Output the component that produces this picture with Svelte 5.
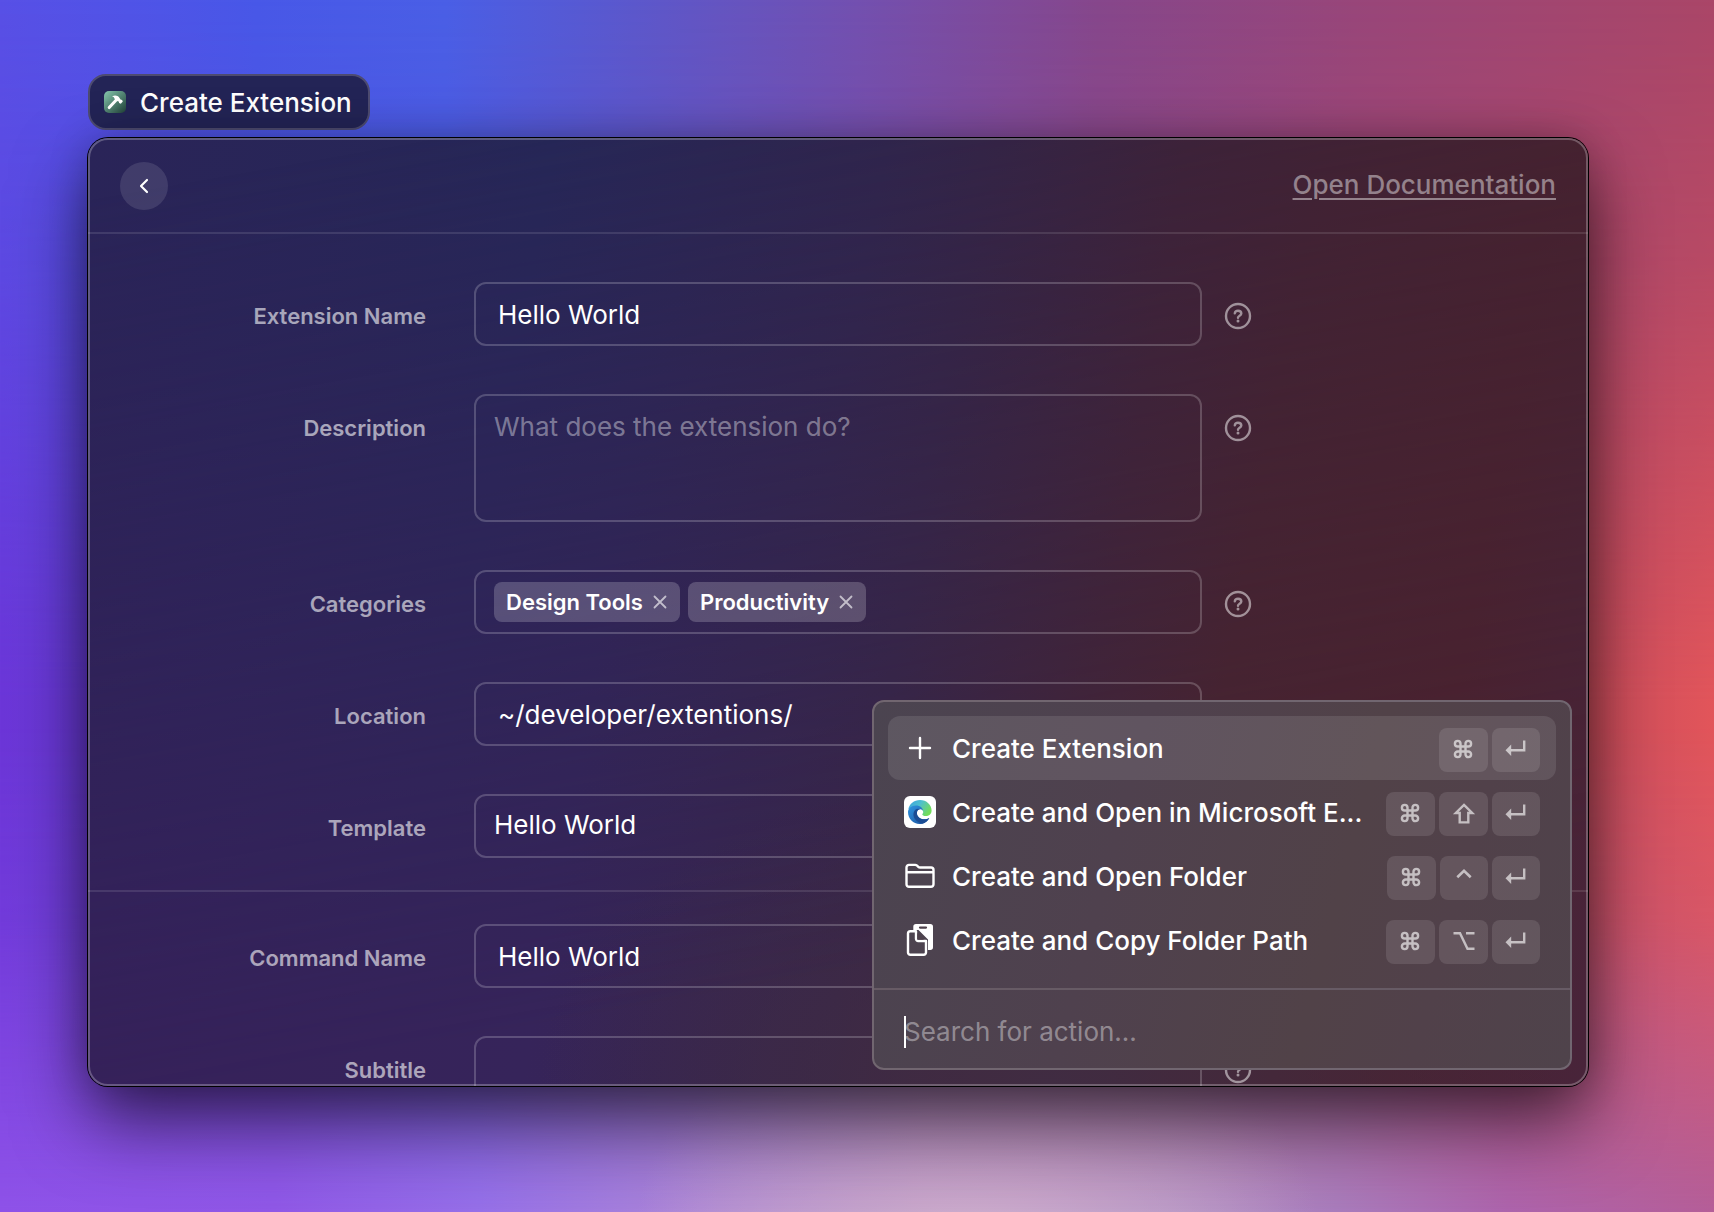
<script>
  let name = $state('Hello World');
  let description = $state('');
  let categories = $state(['Design Tools', 'Productivity']);
  let location = $state('~/developer/extentions/');
  let template = $state('Hello World');
  let command = $state('Hello World');
  let subtitle = $state('');
  let query = $state('');

  const actions = [
    { icon: 'plus', label: 'Create Extension', keys: ['command', 'return'], active: true },
    { icon: 'edge', label: 'Create and Open in Microsoft E...', keys: ['command', 'shift', 'return'] },
    { icon: 'folder', label: 'Create and Open Folder', keys: ['command', 'control', 'return'] },
    { icon: 'copy', label: 'Create and Copy Folder Path', keys: ['command', 'option', 'return'] }
  ];

  function removeCategory(category) {
    categories = categories.filter((c) => c !== category);
  }
</script>

{#snippet help(topic)}
  <button class="help" type="button" aria-label={`Help: ${topic}`}>
    <svg viewBox="0 0 28 28" fill="none" stroke="currentColor" stroke-width="2.400" stroke-linecap="round" stroke-linejoin="round">
      <circle cx="14" cy="14" r="12" />
      <path d="M10.800 11.300c.2-1.600 1.500-2.500 3.200-2.500 1.900 0 3.300 1 3.300 2.700 0 2.300-3.300 2.200-3.300 4.300" />
      <circle cx="14" cy="19" r="1.500" fill="currentColor" stroke="none" />
    </svg>
  </button>
{/snippet}

{#snippet keycap(key)}
  <kbd class={key} aria-label={key}>
    <svg viewBox="0 0 24 24" fill="none" stroke="currentColor" stroke-width="2.400">
      {#if key === 'command'}
        <path d="M8.500 8.500H5.700A2.800 2.800 0 1 1 8.500 5.700v10.600A2.800 2.800 0 1 1 5.700 13.500h10.600A2.800 2.800 0 1 1 13.500 16.300V5.700A2.800 2.800 0 1 1 16.300 8.500z" />
      {:else if key === 'return'}
        <path d="M20.200 2.500v9.800H7" />
        <path d="M1.500 12.300 7.200 6.600v11.400z" fill="currentColor" stroke="none" />
      {:else if key === 'shift'}
        <path d="M12 2.900 20.200 11H16.300v9.400H7.700V11H3.800z" />
      {:else if key === 'control'}
        <path d="M5.300 11.200 12 4.700l6.700 6.500" stroke-width="2.600" />
      {:else}
        <path d="M1.500 3.200H8l7.500 15.600h7M14 3.200h8.500" />
      {/if}
    </svg>
  </kbd>
{/snippet}

<main>
  <div class="badge">
    <svg viewBox="0 0 22 22">
      <defs>
        <linearGradient id="tile" x1="0" y1="0" x2="1" y2="1">
          <stop offset="0" stop-color="#86c8ae" />
          <stop offset="1" stop-color="#1f4038" />
        </linearGradient>
      </defs>
      <rect width="22" height="22" rx="5" fill="url(#tile)" />
      <path d="M5.200 16.600 12 9.200" stroke="#fff" stroke-width="3" stroke-linecap="round" />
      <path d="M8 5.600c2.600-1.800 5.400-1.300 7.200.8l1.300 2.200 1.600.3.700 1.700-2 2.100-1.700-.6-.3-1.500-1.800-.6-2.600-2.400c-.2-1.300-1-1.800-2.400-2z" fill="#fff" />
    </svg>
    <span class="text">Create Extension</span>
  </div>

  <section class="window" aria-label="Create Extension">
    <header>
      <button class="back" type="button" aria-label="Back">
        <svg viewBox="0 0 16 16" fill="none" stroke="currentColor" stroke-width="2.200" stroke-linecap="round" stroke-linejoin="round">
          <path d="M11 2 5 8l6 6" />
        </svg>
      </button>
      <a href="#documentation">Open Documentation</a>
    </header>

    <form onsubmit={(e) => e.preventDefault()}>
      <div class="group">
        <div class="row">
          <label for="name">Extension Name</label>
          <input id="name" class="field" bind:value={name} />
          {@render help('Extension Name')}
        </div>
        <div class="row">
          <label for="description">Description</label>
          <textarea id="description" class="field" placeholder="What does the extension do?" bind:value={description}></textarea>
          {@render help('Description')}
        </div>
        <div class="row">
          <span class="label" id="categories">Categories</span>
          <div class="field chips" role="group" aria-labelledby="categories">
            {#each categories as category (category)}
              <span class="chip">
                {category}
                <button type="button" aria-label={`Remove ${category}`} onclick={() => removeCategory(category)}>
                  <svg viewBox="0 0 14 14" fill="none" stroke="currentColor" stroke-width="1.800" stroke-linecap="round">
                    <path d="m1.500 1.500 11 11M12.500 1.500l-11 11" />
                  </svg>
                </button>
              </span>
            {/each}
          </div>
          {@render help('Categories')}
        </div>
        <div class="row">
          <label for="location">Location</label>
          <input id="location" class="field" bind:value={location} />
        </div>
        <div class="row">
          <label for="template">Template</label>
          <select id="template" class="field" bind:value={template}>
            <option>Hello World</option>
          </select>
        </div>
      </div>
      <div class="group divided">
        <div class="row">
          <label for="command">Command Name</label>
          <input id="command" class="field" bind:value={command} />
        </div>
        <div class="row">
          <label for="subtitle">Subtitle</label>
          <input id="subtitle" class="field" bind:value={subtitle} />
          {@render help('Subtitle')}
        </div>
      </div>
    </form>

    <div class="panel">
      <ul>
        {#each actions as action}
          <li>
            <button type="button" class="action" class:active={action.active}>
              <svg class="icon" viewBox="0 0 32 32" fill="none" stroke="currentColor" stroke-width="2.400" stroke-linecap="round" stroke-linejoin="round">
                {#if action.icon === 'plus'}
                  <path d="M16 6v20M6 16h20" />
                {:else if action.icon === 'edge'}
                  <defs>
                    <linearGradient id="sky" x1="0" y1="0" x2="1" y2=".5">
                      <stop offset="0" stop-color="#3aa0e0" />
                      <stop offset=".5" stop-color="#4dbfce" />
                      <stop offset="1" stop-color="#72dc5c" />
                    </linearGradient>
                    <linearGradient id="sea" x1="0" y1="0" x2="1" y2="1">
                      <stop offset="0" stop-color="#2f94e0" />
                      <stop offset="1" stop-color="#1a4f9c" />
                    </linearGradient>
                  </defs>
                  <g stroke="none">
                    <rect width="32" height="32" rx="6" fill="#fff" />
                    <path d="M4.300 13.500C5.200 8 10 4 16 4c6.600 0 11.600 5 11.600 10.400 0 3.600-2.800 5.600-5.800 5.600-2.200 0-3.500-.7-3.500-1.500 0-.6.900-1 .9-2.400 0-2.600-2.800-4.900-6.700-4.900-3.400 0-6.400 1.200-8.200 2.300z" fill="url(#sky)" />
                    <path d="M4 16c0-3.400 3.300-6.600 8-6.600 4.300 0 7.200 2.600 7.200 6.200 0-1.400-1.400-2.400-3-2.400-2 0-3.300 1.600-3.300 3.700 0 4 3.900 6.400 7.700 6.400 1.800 0 3.300-.5 4.700-1.300-1.900 3.600-5.400 6-9.600 6C9.200 28 4 22.600 4 16z" fill="url(#sea)" />
                    <path d="M11.300 13.800c-2.300 2.300-2.500 6.200-.4 9.200 1.800 2.600 4.600 4 7.400 4.700 3-.7 5.500-2.800 7-5.700-1.400.8-2.900 1.300-4.700 1.300-3.800 0-7.700-2.400-7.700-6.400 0-2.100 1.300-3.700 3.300-3.700-1.700-.9-3.600-.7-4.900.6z" fill="#1b4c94" />
                  </g>
                {:else if action.icon === 'folder'}
                  <path d="M2.500 12.300h27M5 4.900h6.200c.8 0 1.300.3 1.900.8l1.200 1.100c.5.500 1 .7 1.800.7H27a2.500 2.500 0 0 1 2.500 2.500v14.300a2.500 2.500 0 0 1-2.500 2.500H5a2.500 2.500 0 0 1-2.500-2.500V7.400A2.500 2.500 0 0 1 5 4.900z" />
                {:else}
                  <path d="M12 0h14.300A2.700 2.700 0 0 1 29 2.700V23.300a2.700 2.700 0 0 1-2.700 2.700H24V15.500L14.500 6H9.300V2.700A2.700 2.700 0 0 1 12 0z" fill="currentColor" stroke="none" />
                  <path d="M16 3.600h6" stroke="#4f414c" stroke-width="2.200" />
                  <path d="M12 7.300H6.300A2.300 2.300 0 0 0 4 9.600v18.900a2.300 2.300 0 0 0 2.300 2.300h13.400a2.300 2.300 0 0 0 2.300-2.300V17M12 7.300v7.500a2.200 2.200 0 0 0 2.200 2.200H22" />
                  <path d="M13.300 9v6.700H20z" fill="#4f414c" stroke="none" />
                {/if}
              </svg>
              <span class="text">{action.label}</span>
              <span class="keys">
                {#each action.keys as key}{@render keycap(key)}{/each}
              </span>
            </button>
          </li>
        {/each}
      </ul>
      <div class="search">
        <input type="text" aria-label="Search for action" placeholder="Search for action..." bind:value={query} />
        <span class="caret"></span>
      </div>
    </div>
  </section>
</main>

<style>
  :global(body) {
    margin: 0;
  }

  main,
  main * {
    box-sizing: border-box;
  }

  main {
    position: relative;
    isolation: isolate;
    display: flex;
    flex-direction: column;
    align-items: flex-start;
    gap: 8px;
    height: 100vh;
    min-height: 800px;
    padding: 74px 126px 126px 88px;
    overflow: hidden;
    color: #fff;
    font-family: Inter, 'Liberation Sans', sans-serif;
    font-size: 26px;
    line-height: 32px;
    background: linear-gradient(90deg, #5850e6, #4858e8 15%, #4a5fe6 26%, #5c58cc 37%, #7350b0 50%, #86478c 64%, #98467a 79%, #aa4668);
  }

  main::before,
  main::after {
    content: '';
    position: absolute;
    inset: 0;
    z-index: -1;
  }

  main::before {
    background: linear-gradient(90deg, #6c36d8, #5a46d0 25%, #7a4898 50%, #a84668 75%, #c84c5c 92%, #e2555a);
    mask-image: linear-gradient(#0000, #0004 22%, #000 58%);
  }

  main::after {
    background:
      radial-gradient(ellipse 20% 20% at 57% 102%, #ccaccc, #ccaccc00),
      linear-gradient(90deg, #8e52e8, #9058e6 16%, #9670e8 28%, #ae88d4 42%, #bc96c8 54%, #b090c4 68%, #a87cbc 78%, #ac64ac 88%, #b45e98);
    mask-image: linear-gradient(#0000 60%, #0003 76%, #000);
  }

  button,
  input,
  textarea,
  select {
    margin: 0;
    padding: 0;
    border: 0;
    outline: 0;
    background: none;
    color: inherit;
    font: inherit;
    appearance: none;
  }

  svg {
    display: block;
    flex: none;
  }

  .badge {
    display: flex;
    align-items: center;
    gap: 14px;
    height: 56px;
    flex: none;
    padding: 0 16px 0 14px;
    border: 2px solid #4d4b70;
    border-radius: 18px;
    background: #232456;
    font-weight: 500;
  }

  .badge svg {
    width: 22px;
    height: 22px;
  }

  .window {
    position: relative;
    align-self: stretch;
    flex: 1;
    min-height: 0;
    overflow: hidden;
    border-radius: 20px;
    isolation: isolate;
    background: linear-gradient(100deg, #2a2458, #262757 28%, #2f254c 48%, #3c2239 66%, #442230 90%);
    box-shadow:
      0 0 0 1px #000,
      0 36px 72px #0009,
      0 0 40px #0003;
  }

  .window::before {
    content: '';
    position: absolute;
    inset: 0;
    z-index: -1;
    background:
      radial-gradient(ellipse 34% 34% at 64% 100%, #402c42, #402c4200),
      linear-gradient(100deg, #36205a, #36245a 36%, #38264a 54%, #482430 74%, #4a2230 88%, #48243a);
    mask-image: linear-gradient(170deg, #0000 5%, #000 80%);
  }

  .window::after {
    content: '';
    position: absolute;
    inset: 0;
    border: 2px solid #ffffff40;
    border-radius: inherit;
    pointer-events: none;
  }

  header {
    display: flex;
    align-items: center;
    justify-content: space-between;
    height: 96px;
    padding: 2px 32px 0;
    border-bottom: 2px solid #ffffff1c;
  }

  .back {
    display: grid;
    place-items: center;
    width: 48px;
    height: 48px;
    border-radius: 50%;
    background: #ffffff1c;
  }

  .back svg {
    width: 16px;
    height: 16px;
  }

  header a {
    padding-bottom: 2px;
    color: #ffffff70;
    font-weight: 500;
    text-decoration-thickness: 2px;
    text-underline-offset: 4px;
  }

  .group {
    display: flex;
    flex-direction: column;
    gap: 48px;
    padding: 48px 0 32px;
  }

  .divided {
    padding-top: 32px;
    border-top: 2px solid #ffffff1c;
  }

  .row {
    display: grid;
    grid-template-columns: 1fr 728px 1fr;
    align-items: start;
  }

  label,
  .label {
    padding: 18px 48px 0 0;
    color: #ffffff99;
    font-size: 22px;
    font-weight: 600;
    text-align: right;
  }

  .field {
    width: 100%;
    height: 64px;
    padding: 0 22px;
    border: 2px solid #ffffff33;
    border-radius: 12px;
  }

  textarea.field {
    display: block;
    height: 128px;
    padding: 15px 18px;
    resize: none;
  }

  select.field {
    padding: 0 18px 2px;
  }

  textarea::placeholder,
  .search input::placeholder {
    color: #ffffff66;
    opacity: 1;
  }

  .chips {
    display: flex;
    gap: 8px;
    padding: 10px 18px;
  }

  .chip {
    display: flex;
    align-items: center;
    gap: 10px;
    height: 40px;
    padding: 0 13px 0 12px;
    border-radius: 8px;
    background: #ffffff33;
    font-size: 22px;
    font-weight: 600;
  }

  .chip button {
    color: #ffffffa0;
  }

  .chip svg {
    width: 14px;
    height: 14px;
  }

  .help {
    width: 28px;
    height: 28px;
    margin: 20px 0 0 22px;
    color: #ffffff80;
  }

  .panel {
    position: absolute;
    right: 16px;
    bottom: 16px;
    width: 700px;
    border: 2px solid #716670;
    border-radius: 12px;
    background: linear-gradient(105deg, #4b4450, #4f414e 35%, #514248 65%, #51414a 80%, #4f434b);
  }

  ul {
    margin: 0;
    padding: 14px 14px 16px;
    list-style: none;
  }

  .action {
    display: flex;
    align-items: center;
    gap: 16px;
    width: 100%;
    height: 64px;
    padding: 0 16px;
    border-radius: 12px;
    font-weight: 500;
    text-align: left;
  }

  .active {
    background: #ffffff1a;
  }

  .icon {
    width: 32px;
    height: 32px;
  }

  .text {
    flex: 1;
    padding-top: 2px;
    white-space: nowrap;
  }

  .keys {
    display: flex;
    gap: 4px;
    padding-top: 4px;
  }

  kbd {
    display: grid;
    place-items: center;
    width: 49px;
    height: 44px;
    border-radius: 8px;
    background: #ffffff1c;
    color: #ffffffa0;
  }

  kbd.return,
  kbd.control {
    width: 48px;
  }

  kbd svg {
    width: 24px;
    height: 24px;
  }

  .search {
    position: relative;
    display: flex;
    align-items: center;
    height: 80px;
    padding: 6px 30px 0;
    border-top: 2px solid #675b65;
  }

  .search input {
    width: 100%;
    caret-color: transparent;
  }

  .caret {
    position: absolute;
    left: 30px;
    top: 26px;
    width: 2px;
    height: 32px;
    background: #fff;
  }
</style>
